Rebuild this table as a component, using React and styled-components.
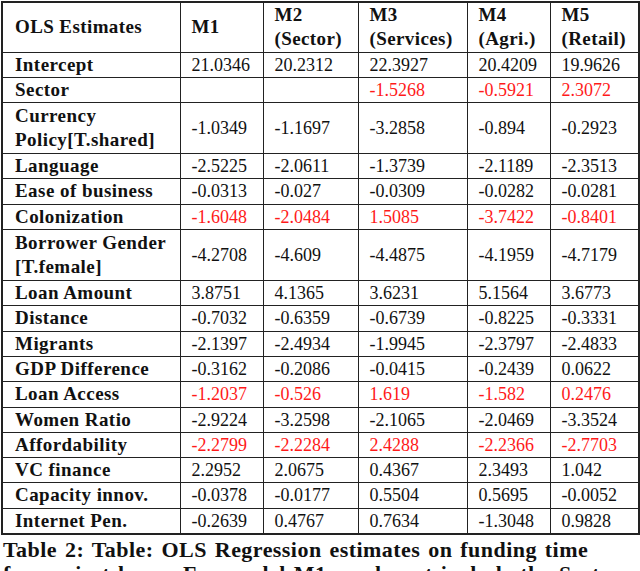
import React from 'react';
import styled, { createGlobalStyle } from 'styled-components';

const GlobalStyle = createGlobalStyle`
  html, body {
    margin: 0;
    padding: 0;
    background: #ffffff;
  }
  body {
    font-family: "Liberation Serif", "Times New Roman", serif;
    color: #111;
    overflow: hidden;
  }
`;

const Page = styled.div`
  width: 640px;
  height: 571px;
  overflow: hidden;
  padding: 1px 0 0 1px;
  box-sizing: border-box;
`;

const Table = styled.table`
  border-collapse: collapse;
  border: 2px solid #222;
  table-layout: fixed;
  width: 637px;
`;

const HeadCell = styled.th`
  text-align: left;
  vertical-align: middle;
  font-weight: bold;
  font-size: 19px;
  line-height: 24.3px;
  letter-spacing: 0.4px;
  padding: 0 0 0 ${(p) => (p.$first ? 12 : 11)}px;
  border: 1px solid #222;
  height: 48.6px;
`;

const LabelCell = styled.td`
  font-weight: bold;
  font-size: 19px;
  letter-spacing: 0.45px;
  line-height: 24.3px;
  padding: ${(p) => (p.$tall ? '0.7px' : '0')} 0 ${(p) => (p.$tall ? '0.7px' : '0')} 12px;
  border: 1px solid #222;
  vertical-align: middle;
  white-space: nowrap;
`;

const ValueCell = styled.td`
  font-size: 18px;
  line-height: 24.3px;
  padding: 0 0 0 11px;
  border: 1px solid #222;
  vertical-align: middle;
  color: ${(p) => (p.$red ? '#ff1a1a' : '#111')};
  white-space: nowrap;
`;

const Caption = styled.p`
  margin: 3px 0 0 2px;
  font-weight: bold;
  font-size: 22px;
  line-height: 24px;
  letter-spacing: 0.45px;
  word-spacing: 2px;
  width: 620px;
`;

const widths = [178, 83, 95, 109, 83, 89];

const headers = [
  ['OLS Estimates'],
  ['M1'],
  ['M2', '(Sector)'],
  ['M3', '(Services)'],
  ['M4', '(Agri.)'],
  ['M5', '(Retail)'],
];

const rows = [
  { label: ['Intercept'], values: ['21.0346', '20.2312', '22.3927', '20.4209', '19.9626'] },
  { label: ['Sector'], values: ['', '', '-1.5268', '-0.5921', '2.3072'], red: true },
  { label: ['Currency', 'Policy[T.shared]'], values: ['-1.0349', '-1.1697', '-3.2858', '-0.894', '-0.2923'] },
  { label: ['Language'], values: ['-2.5225', '-2.0611', '-1.3739', '-2.1189', '-2.3513'] },
  { label: ['Ease of business'], values: ['-0.0313', '-0.027', '-0.0309', '-0.0282', '-0.0281'] },
  { label: ['Colonization'], values: ['-1.6048', '-2.0484', '1.5085', '-3.7422', '-0.8401'], red: true },
  { label: ['Borrower Gender', '[T.female]'], values: ['-4.2708', '-4.609', '-4.4875', '-4.1959', '-4.7179'] },
  { label: ['Loan Amount'], values: ['3.8751', '4.1365', '3.6231', '5.1564', '3.6773'] },
  { label: ['Distance'], values: ['-0.7032', '-0.6359', '-0.6739', '-0.8225', '-0.3331'] },
  { label: ['Migrants'], values: ['-2.1397', '-2.4934', '-1.9945', '-2.3797', '-2.4833'] },
  { label: ['GDP Difference'], values: ['-0.3162', '-0.2086', '-0.0415', '-0.2439', '0.0622'] },
  { label: ['Loan Access'], values: ['-1.2037', '-0.526', '1.619', '-1.582', '0.2476'], red: true },
  { label: ['Women Ratio'], values: ['-2.9224', '-3.2598', '-2.1065', '-2.0469', '-3.3524'] },
  { label: ['Affordability'], values: ['-2.2799', '-2.2284', '2.4288', '-2.2366', '-2.7703'], red: true },
  { label: ['VC finance'], values: ['2.2952', '2.0675', '0.4367', '2.3493', '1.042'] },
  { label: ['Capacity innov.'], values: ['-0.0378', '-0.0177', '0.5504', '0.5695', '-0.0052'] },
  { label: ['Internet Pen.'], values: ['-0.2639', '0.4767', '0.7634', '-1.3048', '0.9828'] },
];

const Lines = ({ parts }) =>
  parts.map((p, i) => (
    <React.Fragment key={i}>
      {i > 0 && <br />}
      {p}
    </React.Fragment>
  ));

export default function App() {
  return (
    <Page>
      <GlobalStyle />
      <Table>
        <colgroup>
          {widths.map((w, i) => (
            <col key={i} style={{ width: w }} />
          ))}
        </colgroup>
        <thead>
          <tr>
            {headers.map((h, i) => (
              <HeadCell key={i} $first={i === 0}>
                <Lines parts={h} />
              </HeadCell>
            ))}
          </tr>
        </thead>
        <tbody>
          {rows.map((r, i) => (
            <tr key={i}>
              <LabelCell $tall={r.label.length > 1}>
                <Lines parts={r.label} />
              </LabelCell>
              {r.values.map((v, j) => (
                <ValueCell key={j} $red={r.red}>
                  {v}
                </ValueCell>
              ))}
            </tr>
          ))}
        </tbody>
      </Table>
      <Caption>
        Table 2: Table: OLS Regression estimates on funding time for project
        loans. For model M1 we do not include the Sector variable.
      </Caption>
    </Page>
  );
}
